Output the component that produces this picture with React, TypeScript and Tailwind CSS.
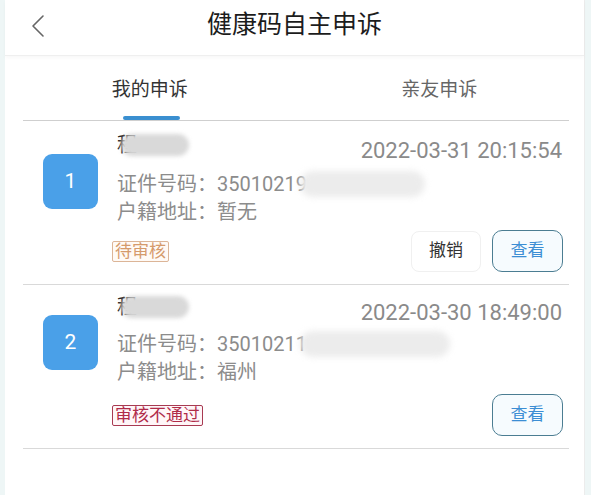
import React from "react";

const FONT = { fontFamily: '"Roboto","Noto Sans CJK SC","Noto Sans",sans-serif' };

function Card(props: {
  n: string;
  time: string;
  idHead: string;
  blobW: number;
  addr: string;
  tag: "pending" | "rejected";
  showCancel: boolean;
  pt: string;
  mt1: string;
  mt2: string;
  pb: string;
}) {
  return (
    <div className={`mx-[18px] mr-[15px] border-b border-[#d9d9d9] ${props.pt} ${props.pb}`}>
      <div className="flex items-center">
        <div className="ml-[20px] w-[55px] h-[55px] rounded-[9px] bg-[#4aa0e8] text-white text-[21px] flex items-center justify-center shrink-0">
          {props.n}
        </div>
        <div className="ml-[19px] flex-1 pr-[7px]">
          <div className="flex justify-between items-start h-[28px]">
            <div className="flex items-center -mt-[3px] h-[22px]">
              <span className="text-[20px] leading-[22px] text-[#222]">程</span>
              <span className="inline-block w-[68px] h-[22px] rounded-full bg-[#d9d9d9] blur-[2px] -ml-[16px]" />
            </div>
            <span className="text-[22px] leading-[28px] text-[#8a8a8a]">{props.time}</span>
          </div>
          <div className={`${props.mt1} text-[20px] leading-[28px] text-[#8c8c8c] flex items-center whitespace-nowrap`}>
            <span>证件号码：{props.idHead}</span>
            <span
              className="inline-block h-[26px] bg-[#ececec] blur-[3px] rounded-full -ml-[7px]"
              style={{ width: props.blobW }}
            />
          </div>
          <div className="text-[20px] leading-[28px] text-[#8c8c8c]">户籍地址：{props.addr}</div>
        </div>
      </div>
      <div className={`flex items-center justify-between pl-[89px] pr-[6px] ${props.mt2}`}>
        {props.tag === "pending" ? (
          <span className="text-[17px] leading-[19px] px-[2px] border border-[#dcb597] text-[#d59a6c] bg-[#fffaf6] rounded-[2px]">
            待审核
          </span>
        ) : (
          <span className="text-[17px] leading-[19px] px-[2px] border border-[#a83a52] text-[#b02c4a] bg-[#fff6f8] rounded-[2px]">
            审核不通过
          </span>
        )}
        <div className="flex items-center gap-[11px]">
          {props.showCancel && (
            <div className="w-[70px] h-[41px] rounded-[8px] border border-[#f0f0f0] bg-white text-[17px] text-[#333] flex items-center justify-center">
              撤销
            </div>
          )}
          <div className="w-[71px] h-[42px] rounded-[10px] border-[1.5px] border-[#4b7d92] bg-[#f6fbfe] text-[17px] text-[#3c8ed4] flex items-center justify-center">
            查看
          </div>
        </div>
      </div>
    </div>
  );
}

export default function App() {
  return (
    <div className="w-[591px] h-[495px] bg-[#eef6f6] overflow-hidden" style={FONT}>
      <div className="ml-[5px] w-[580px] h-full bg-white border-r border-[#ececec]">
        <div className="relative h-[56px] flex items-center justify-center border-b border-[#efefef] shadow-[0_2px_4px_rgba(0,0,0,0.03)]">
          <svg className="absolute left-[26px] top-[14px]" width="14" height="24" viewBox="0 0 14 24">
            <polyline points="12,2 2,12 12,22" fill="none" stroke="#666" strokeWidth="1.6" strokeLinecap="round" strokeLinejoin="round" />
          </svg>
          <span className="text-[25px] leading-[30px] text-[#1c1c1c] -mt-[6px]">健康码自主申诉</span>
        </div>
        <div className="flex h-[64px]">
          <div className="relative flex-1 flex justify-center">
            <span className="mt-[22px] text-[19px] leading-[24px] text-[#333]">我的申诉</span>
            <span className="absolute bottom-0 left-[118px] w-[57px] h-[4px] rounded-[2px] bg-[#3a8fd0]" />
          </div>
          <div className="flex-1 flex justify-center">
            <span className="mt-[22px] text-[19px] leading-[24px] text-[#666]">亲友申诉</span>
          </div>
        </div>
        <div className="ml-[18px] mr-[15px] h-px bg-[#cfcfcf]" />
        <Card
          n="1"
          time="2022-03-31 20:15:54"
          idHead="35010219"
          blobW={125}
          addr="暂无"
          tag="pending"
          showCancel={true}
          pt="pt-[16px]"
          mt1="mt-[5px]"
          mt2="mt-[4px]"
          pb="pb-[12px]"
        />
        <Card
          n="2"
          time="2022-03-30 18:49:00"
          idHead="35010211"
          blobW={150}
          addr="福州"
          tag="rejected"
          showCancel={false}
          pt="pt-[14px]"
          mt1="mt-[3px]"
          mt2="mt-[8px]"
          pb="pb-[12px]"
        />
      </div>
    </div>
  );
}
